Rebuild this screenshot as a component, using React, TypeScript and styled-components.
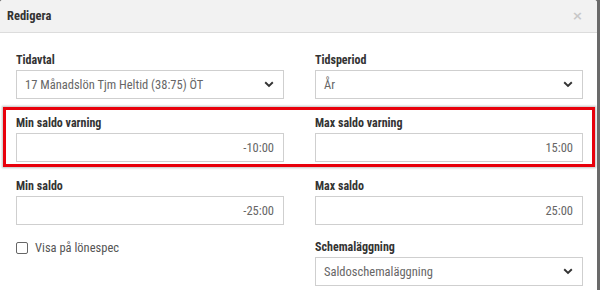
import React from "react";
import styled, { createGlobalStyle } from "styled-components";

const Global = createGlobalStyle`
  html, body { margin: 0; padding: 0; background: #6a6a6a; overflow: hidden; }
  body { font-family: "Roboto Condensed", "Liberation Sans Narrow", "DejaVu Sans Condensed", Roboto, sans-serif; }
  * { box-sizing: border-box; }
`;

const Dialog = styled.div`
  width: 597px;
  height: 300px;
  background: #fff;
  border-top-left-radius: 3px;
  border-top-right-radius: 3px;
  overflow: hidden;
`;

const Header = styled.div`
  height: 33px;
  background: #f2f2f2;
  border-bottom: 1px solid #dcdcdc;
  display: flex;
  align-items: center;
  justify-content: space-between;
  padding: 0 14px 2px 7px;
`;

const Title = styled.div`
  font-size: 12.5px;
  font-weight: 700;
  color: #333;
`;

const Close = styled.span`
  font-family: "DejaVu Sans", sans-serif;
  font-size: 13px;
  font-weight: 700;
  color: #c8c8c8;
  line-height: 1;
`;

const Body = styled.div`
  padding-top: 20px;
  display: flex;
  flex-direction: column;
`;

const Row = styled.div<{ $gap?: number }>`
  display: grid;
  grid-template-columns: 268px 268px;
  column-gap: 31px;
  padding-left: 16px;
  margin-bottom: ${(p) => p.$gap ?? 0}px;
`;

const Highlight = styled.div`
  margin: 0 0 12px 3px;
  width: 592px;
  border: 3px solid #e8000b;
  padding: 6px 0 2px 0;
  box-shadow: 0 0 2px 1px rgba(0, 0, 0, 0.25);
  & > div { padding-left: 10px; }
`;

const Field = styled.div`
  display: flex;
  flex-direction: column;
`;

const Label = styled.label`
  font-size: 12px;
  font-weight: 700;
  color: #333;
  line-height: 15px;
  margin-bottom: 2px;
`;

const Box = styled.div<{ $align?: "left" | "right" }>`
  height: 29px;
  border: 1px solid #cfcfcf;
  display: flex;
  align-items: center;
  justify-content: ${(p) => (p.$align === "right" ? "flex-end" : "space-between")};
  padding: 0 ${(p) => (p.$align === "right" ? "9px" : "9px")} 0 8px;
  font-size: 12.5px;
  color: #666;
`;

const CheckRow = styled.div`
  display: flex;
  align-items: center;
  gap: 7px;
  height: 15px;
  font-size: 12.5px;
  color: #555;
`;

const Check = styled.span`
  width: 12px;
  height: 12px;
  border: 1px solid #666;
  border-radius: 2px;
  display: inline-block;
`;

const Chevron = () => (
  <svg width="10" height="7" viewBox="0 0 10 7">
    <path d="M1.2 1.3 L5 5 L8.8 1.3" fill="none" stroke="#333" strokeWidth="1.9" />
  </svg>
);

const Select = ({ value }: { value: string }) => (
  <Box>
    <span>{value}</span>
    <Chevron />
  </Box>
);

const NumInput = ({ value }: { value: string }) => <Box $align="right">{value}</Box>;

export default function App() {
  return (
    <>
      <Global />
      <Dialog>
        <Header>
          <Title>Redigera</Title>
          <Close>×</Close>
        </Header>
        <Body>
          <Row $gap={8}>
            <Field>
              <Label>Tidavtal</Label>
              <Select value="17 Månadslön Tjm Heltid (38:75) ÖT" />
            </Field>
            <Field>
              <Label>Tidsperiod</Label>
              <Select value="År" />
            </Field>
          </Row>
          <Highlight>
            <Row>
              <Field>
                <Label>Min saldo varning</Label>
                <NumInput value="-10:00" />
              </Field>
              <Field>
                <Label>Max saldo varning</Label>
                <NumInput value="15:00" />
              </Field>
            </Row>
          </Highlight>
          <Row $gap={15}>
            <Field>
              <Label>Min saldo</Label>
              <NumInput value="-25:00" />
            </Field>
            <Field>
              <Label>Max saldo</Label>
              <NumInput value="25:00" />
            </Field>
          </Row>
          <Row>
            <Field>
              <CheckRow>
                <Check />
                <span>Visa på lönespec</span>
              </CheckRow>
            </Field>
            <Field>
              <Label>Schemaläggning</Label>
              <Select value="Saldoschemaläggning" />
            </Field>
          </Row>
        </Body>
      </Dialog>
    </>
  );
}
